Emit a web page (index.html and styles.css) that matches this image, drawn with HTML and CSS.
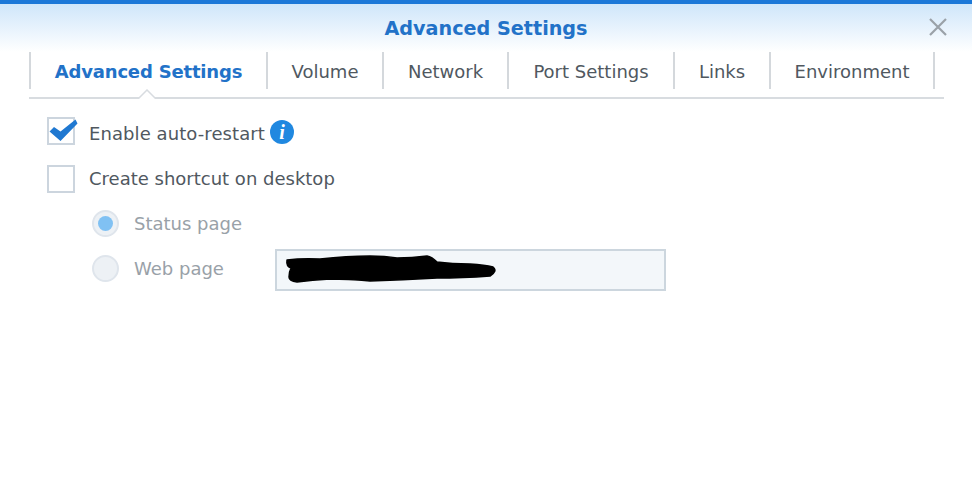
FILE: index.html
```html
<!DOCTYPE html>
<html lang="en">
<head>
<meta charset="utf-8">
<title>Advanced Settings</title>
<link rel="stylesheet" href="styles.css">
</head>
<body>
<div class="dialog">
  <header class="head">
    <h1 class="title">Advanced Settings</h1>
    <svg class="close" width="20" height="20" viewBox="0 0 20 20"><path d="M2 2L18 18M18 2L2 18" stroke="#9aa1a8" stroke-width="2.2" fill="none"/></svg>
  </header>
  <nav class="tabs">
    <div class="tab tab-active t1">Advanced Settings</div>
    <div class="tab t2">Volume</div>
    <div class="tab t3">Network</div>
    <div class="tab t4">Port Settings</div>
    <div class="tab t5">Links</div>
    <div class="tab t6">Environment</div>
    <svg class="caret" width="20" height="10" viewBox="0 0 20 10"><path d="M1 10L10 1L19 10" fill="#fff" stroke="#d8dce0" stroke-width="1.5"/></svg>
  </nav>
  <main class="form">
    <div class="row">
      <span class="check check-on"><svg class="tick" width="30" height="24" viewBox="0 0 30 24"><path d="M0.5 12.6L5 8L11.5 12.5L26.5 0.5L28.5 4.5L11.5 22Z" fill="#1f78d1"/></svg></span>
      <span class="label wide">Enable auto-restart</span>
      <svg class="info" width="24" height="24" viewBox="0 0 24 24"><circle cx="12" cy="12" r="12" fill="#2088e0"/><text x="12" y="19" text-anchor="middle" class="info-i">i</text></svg>
    </div>
    <div class="row">
      <span class="check"></span>
      <span class="label">Create shortcut on desktop</span>
    </div>
    <div class="row sub">
      <span class="radio"><span class="dot"></span></span>
      <span class="label muted">Status page</span>
    </div>
    <div class="row sub">
      <span class="radio"></span>
      <span class="label muted web">Web page</span>
      <div class="input">
        <svg class="scribble" width="222" height="36" viewBox="0 0 222 36"><path d="M10 9Q25 7 43 8Q70 5 93 5Q108 5 120 7Q135 7 150 5Q155 6 160 11Q175 13 193 13Q208 14 216 16Q221 20 213 25Q185 27 160 27Q125 29 93 30Q70 28 53 28Q35 29 20 31Q12 30 12 26Q12 21 14 17Q9 15 10 9Z" fill="#000" stroke="#000" stroke-width="1.5" stroke-linejoin="round"/></svg>
      </div>
    </div>
  </main>
</div>
</body>
</html>
```

FILE: styles.css
```css
* { box-sizing: border-box; }
html, body { margin: 0; padding: 0; background: #fff; }
body { width: 972px; height: 498px; overflow: hidden; font-family: "DejaVu Sans", Verdana, sans-serif; }
.dialog { width: 972px; height: 498px; }
.head {
  position: relative;
  height: 52px;
  border-top: 4px solid #1b78d8;
  background: linear-gradient(#cfe6fa, #fff);
  display: flex;
  justify-content: center;
  padding-top: 13px;
}
.title { margin: 0; font-size: 19.2px; line-height: 24px; font-weight: bold; color: #2272c8; }
.close { position: absolute; right: 24px; top: 13px; }
.tabs {
  position: relative;
  display: flex;
  margin-left: 29px;
  width: 915px;
  height: 47px;
  border-bottom: 2px solid #d8dce0;
  padding-bottom: 8px;
}
.tab {
  border-left: 2px solid #d4d8dc;
  font-size: 18px;
  line-height: 39px;
  color: #50585f;
  text-align: center;
}
.tab-active { font-weight: bold; color: #2272c8; letter-spacing: -0.18px; }
.t1 { width: 237px; }
.t2 { width: 116px; }
.t3 { width: 125px; }
.t4 { width: 166px; }
.t5 { width: 96px; }
.t6 { width: 166px; border-right: 2px solid #d4d8dc; }
.caret { position: absolute; left: 108px; bottom: -2px; }
.form { padding: 21px 0 0 47px; }
.row { display: flex; align-items: center; height: 27px; margin-bottom: 18px; }
.sub { padding-left: 45px; }
.check {
  position: relative;
  width: 28px;
  height: 28px;
  border: 2px solid #ccd5de;
  background: #fff;
  flex: none;
  margin-right: 14px;
}
.check-on { margin-top: -6px; }
.tick { position: absolute; left: 0; top: 0; }
.label { font-size: 18px; color: #50585f; }
.wide { letter-spacing: 0.08px; }
.muted { color: #99a1a8; }
.web { width: 141px; flex: none; }
.info { margin-left: 5px; margin-bottom: 3px; }
.info-i { font-family: "Liberation Serif", serif; font-size: 20px; font-weight: bold; font-style: italic; fill: #fff; }
.radio {
  width: 27px;
  height: 27px;
  border-radius: 50%;
  border: 2px solid #dfe5ec;
  background: #edf1f5;
  flex: none;
  margin-right: 15px;
  display: flex;
  align-items: center;
  justify-content: center;
}
.dot { width: 15px; height: 15px; border-radius: 50%; background: #80c1f3; }
.input {
  position: relative;
  width: 391px;
  height: 42px;
  margin-top: 3px;
  border: 2px solid #ccd6de;
  background: #f3f7fa;
  flex: none;
}
.scribble { position: absolute; left: 0; top: 0; }
```
